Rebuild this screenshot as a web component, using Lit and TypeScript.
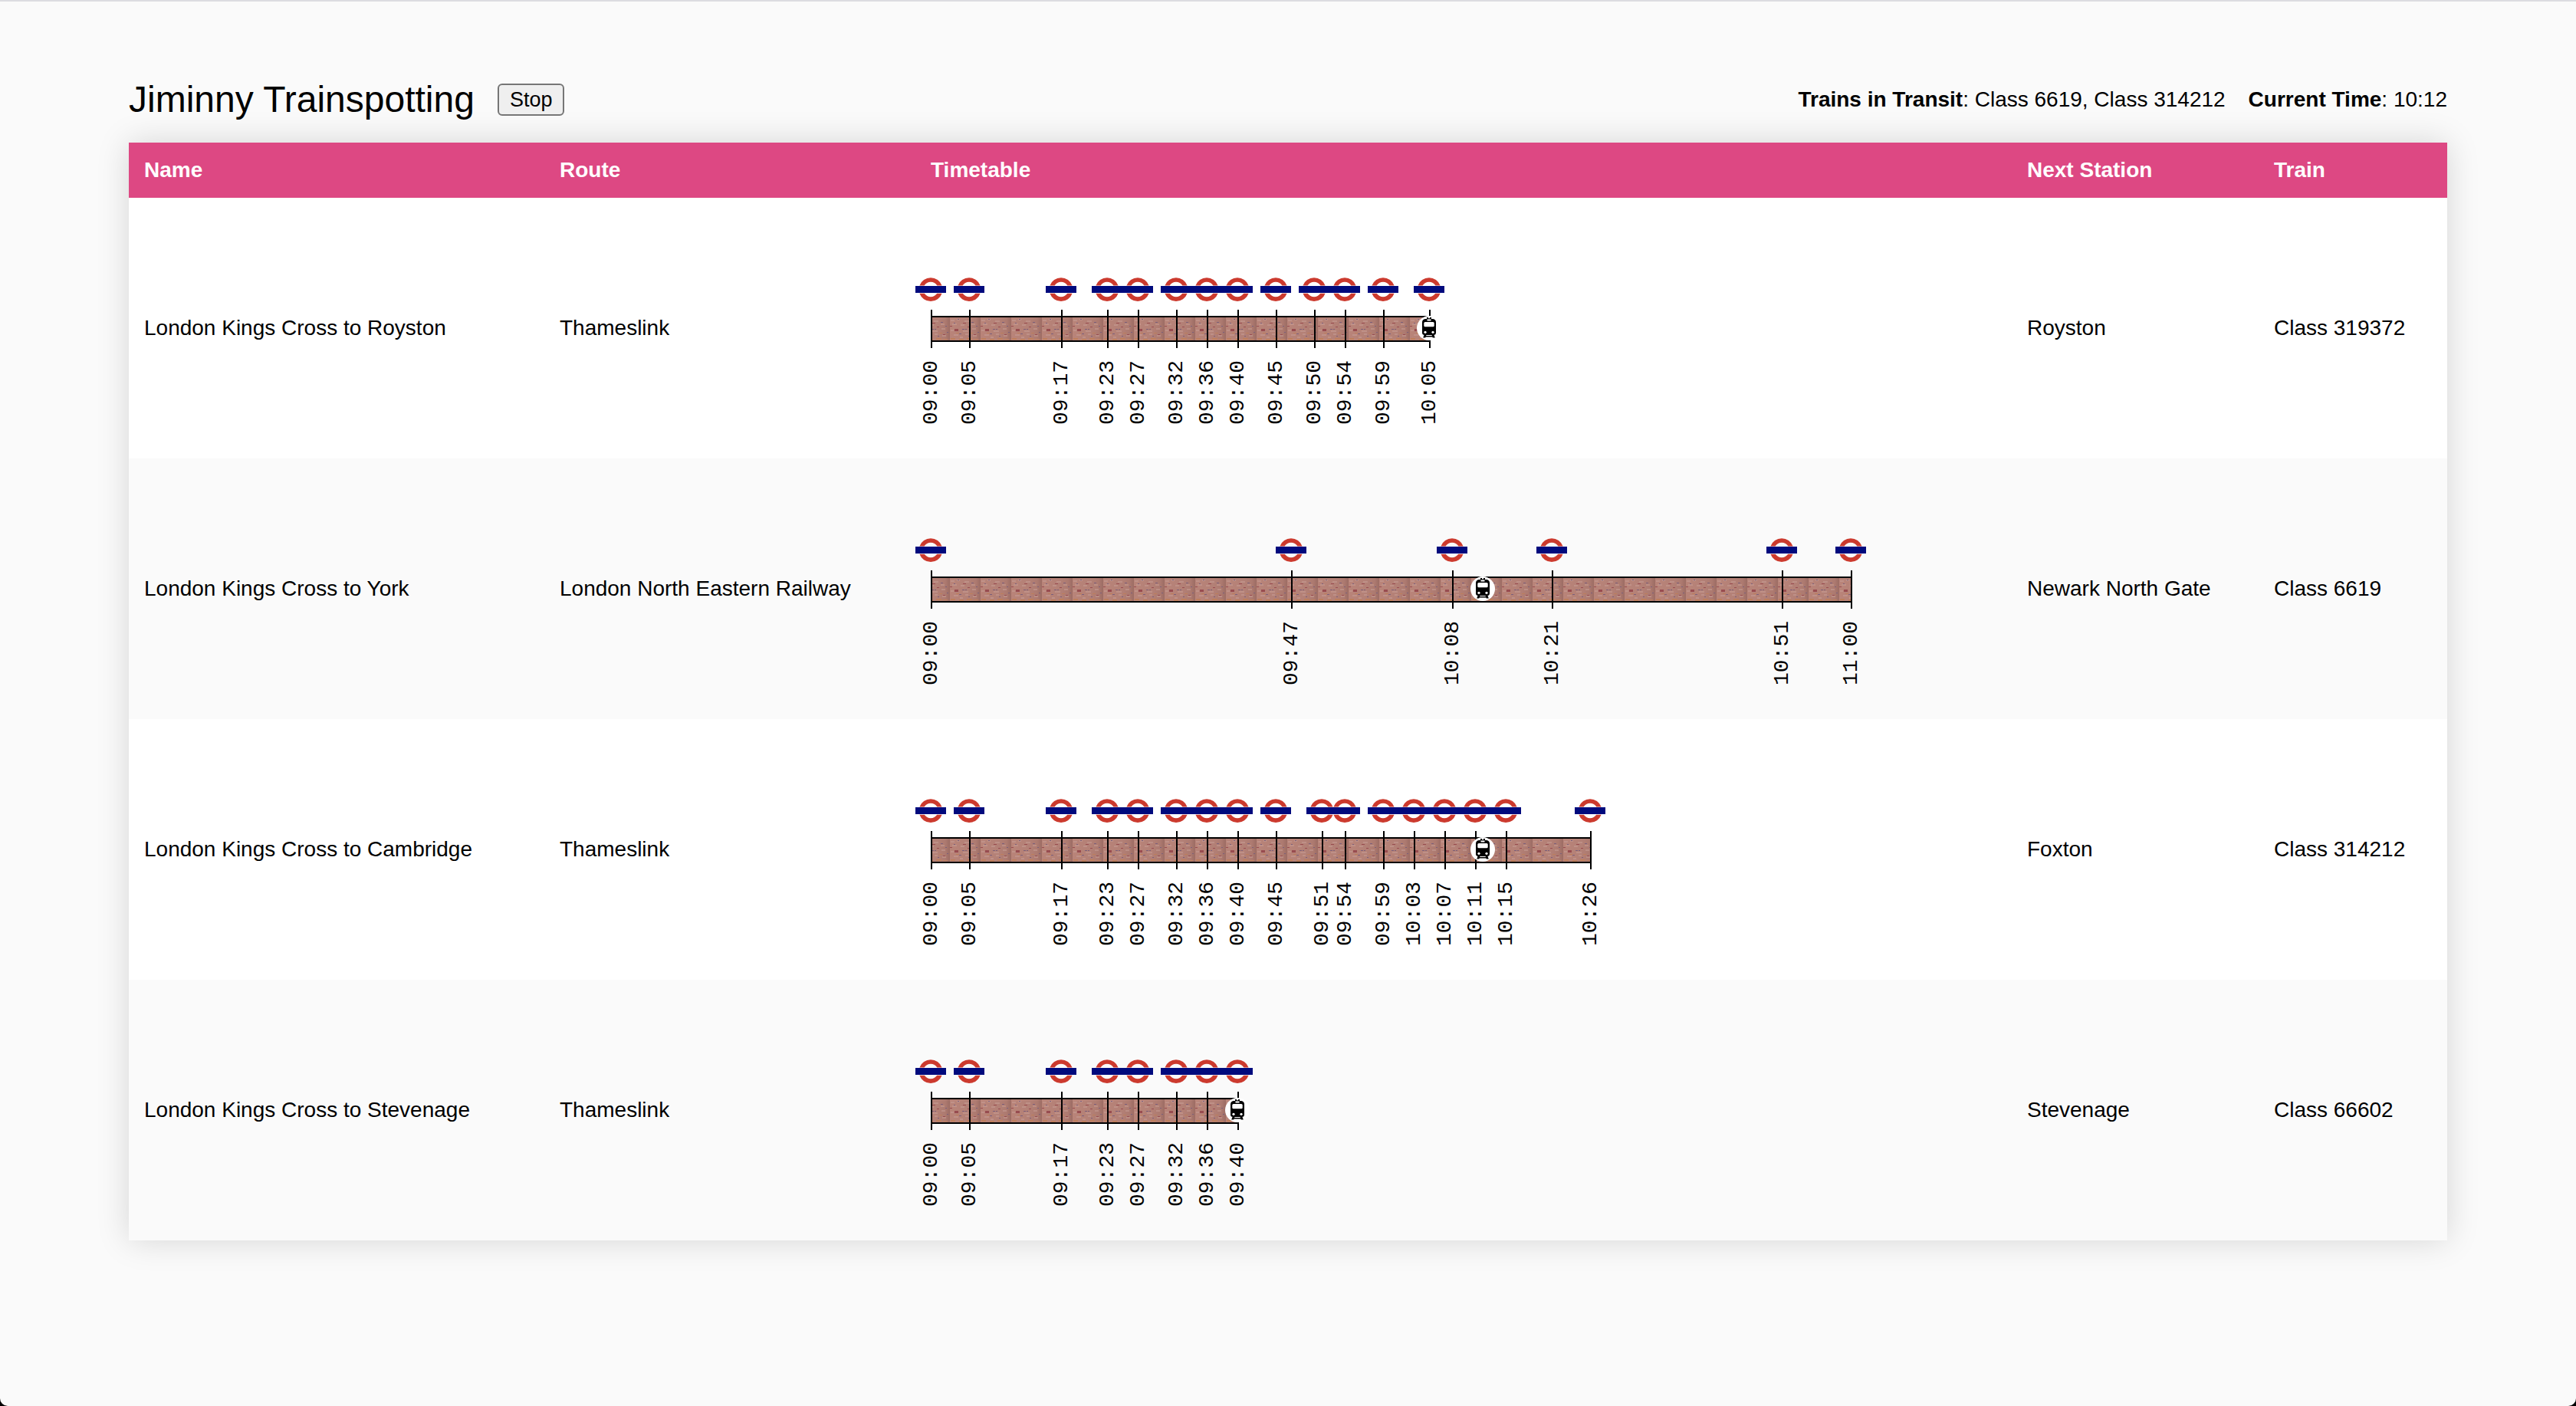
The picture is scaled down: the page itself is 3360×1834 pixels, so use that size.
import { LitElement, html, css } from "lit";
import { customElement, property, state } from "lit/decorators.js";

interface Journey {
  name: string;
  route: string;
  stops: string[];
  next: string;
  train: string;
}

const JOURNEYS: Journey[] = [
  {
    name: "London Kings Cross to Royston",
    route: "Thameslink",
    stops: ["09:00", "09:05", "09:17", "09:23", "09:27", "09:32", "09:36", "09:40", "09:45", "09:50", "09:54", "09:59", "10:05"],
    next: "Royston",
    train: "Class 319372",
  },
  {
    name: "London Kings Cross to York",
    route: "London North Eastern Railway",
    stops: ["09:00", "09:47", "10:08", "10:21", "10:51", "11:00"],
    next: "Newark North Gate",
    train: "Class 6619",
  },
  {
    name: "London Kings Cross to Cambridge",
    route: "Thameslink",
    stops: ["09:00", "09:05", "09:17", "09:23", "09:27", "09:32", "09:36", "09:40", "09:45", "09:51", "09:54", "09:59", "10:03", "10:07", "10:11", "10:15", "10:26"],
    next: "Foxton",
    train: "Class 314212",
  },
  {
    name: "London Kings Cross to Stevenage",
    route: "Thameslink",
    stops: ["09:00", "09:05", "09:17", "09:23", "09:27", "09:32", "09:36", "09:40"],
    next: "Stevenage",
    train: "Class 66602",
  },
];

const PX_PER_MINUTE = 10;

const minutes = (time: string): number => {
  const [h, m] = time.split(":").map(Number);
  return h * 60 + m;
};

// Upper and lower arcs are separate so that the row shows between ring and bar.
const roundel = html`<svg class="roundel" viewBox="0 0 40 32" aria-hidden="true">
  <path d="M5.400 10.500A15.500 15.500 0 0 1 34.600 10.500H28.400A9.800 9.800 0 0 0 11.600 10.500Z" fill="#cc3a2e" />
  <path d="M5.400 20.800A15.500 15.500 0 0 0 34.600 20.800H28.200A9.800 9.800 0 0 1 11.800 20.800Z" fill="#cc3a2e" />
  <rect x="0" y="11" width="40" height="9" fill="#000a7d" />
</svg>`;

const trainIcon = html`<svg class="icon" viewBox="0 0 32 32" role="img" aria-label="Train">
  <circle cx="16" cy="16" r="16" fill="#fff" />
  <path d="M13 2h2v1.200h2V2h2v3.500h-6z" />
  <path d="M11 4h10q4 .8 4 4.500v13.300q0 3.200-3.200 3.200H10.200Q7 25 7 21.800V8.500q0-3.700 4-4.500z" />
  <rect x="13.500" y="4.500" width="5" height="2" fill="#fff" />
  <rect x="9.300" y="8" width="13.400" height="6.300" rx="1.500" fill="#fff" />
  <circle cx="11" cy="21.300" r="1.600" fill="#fff" />
  <circle cx="21" cy="21.300" r="1.600" fill="#fff" />
  <path d="M9.500 25h3l-.5 1h8l-.5-1h3l1.300 3.500h-3l-.5-1H11.700l-.5 1h-3z" />
</svg>`;

@customElement("train-line")
export class TrainLine extends LitElement {
  @property({ attribute: false }) stops: string[] = [];
  @property() now = "";

  static styles = css`
    :host { display: block; }
    .line { position: relative; height: 132px; }
    .track { position: absolute; top: 50px; left: 0; height: 34px; box-sizing: border-box; border-top: 2px solid #000; border-bottom: 2px solid #000; }
    .bricks { display: block; width: 100%; height: 100%; }
    .stop { position: absolute; top: 0; width: 2px; display: flex; flex-direction: column; align-items: center; }
    .roundel { width: 40px; height: 32px; flex: none; display: block; transform: translateX(-1px); }
    .tick { width: 2px; height: 50px; margin-top: 10px; background: #000; }
    .time { margin-top: 16px; writing-mode: vertical-rl; transform: rotate(180deg); font: 28px/32px "Liberation Mono", monospace; }
    .engine { position: absolute; top: 50px; width: 32px; height: 32px; transform: translateX(-50%); }
    .icon { display: block; width: 100%; height: 100%; }
  `;

  private offset(time: string): number {
    return (minutes(time) - minutes(this.stops[0])) * PX_PER_MINUTE;
  }

  render() {
    const length = this.offset(this.stops[this.stops.length - 1]);
    const position = Math.min(this.offset(this.now), length);
    return html`<div class="line">
      <div class="track" style="width:${length}px">
        <svg class="bricks" aria-hidden="true">
          <defs>
            <linearGradient id="clay" x1="0" x2="1" y1="0" y2="0">
              <stop offset="0" stop-color="#b98479" />
              <stop offset=".6" stop-color="#b38076" />
              <stop offset=".85" stop-color="#ad7a70" />
              <stop offset="1" stop-color="#9c6c64" />
            </linearGradient>
            <pattern id="brick" x="25" width="40" height="30" patternUnits="userSpaceOnUse">
              <rect width="40" height="30" fill="url(#clay)" />
              <path d="M1 4h5M9 3h4M19 5h6M28 9h5M3 9h6M14 10h5M1 17h4M17 18h7M29 15h5M5 23h6M20 22h4M30 24h5M13 26h4" stroke="#c9a098" stroke-width="1" fill="none" />
              <path d="M1 27h6v2H1zM12 28h6v2h-6zM22 27h7v2h-7zM31 28h6v1h-6zM8 20h4v1H8zM26 20h4v1h-4z" fill="#bd7e5c" />
              <path d="M6 15h5v3H6zM0 11h3v1H0zM23 12h3v1h-3zM17 7h4v1h-4zM31 22h3v1h-3z" fill="#984c50" />
              <path d="M16 15h3v1h-3zM20 15h2v1h-2zM28 6h3v1h-3zM5 7h2v1H5zM12 21h3v1h-3zM34 11h2v1h-2zM36 19h2v1h-2zM10 2h2v1h-2zM24 24h2v1h-2z" fill="#7b5f7a" />
            </pattern>
          </defs>
          <rect width="100%" height="100%" fill="url(#brick)" />
        </svg>
      </div>
      ${this.stops.map(
        (time) => html`<div class="stop" style="left:${this.offset(time)}px">
          ${roundel}
          <span class="tick"></span>
          <time class="time">${time}</time>
        </div>`
      )}
      <div class="engine" style="left:${position}px">${trainIcon}</div>
    </div>`;
  }
}

@customElement("app-root")
export class AppRoot extends LitElement {
  @state() private running = true;
  private now = "10:12";

  static styles = css`
    :host { display: block; background: #000; color: #000; font: 28px/32px "Liberation Sans", Arial, sans-serif; }
    .page { box-sizing: border-box; min-height: 100vh; padding: 96px 5% 48px; background: #fafafa; border-top: 2px solid #dcdce0; border-radius: 0 0 10px 10px; }
    .bar { display: flex; justify-content: space-between; align-items: center; height: 64px; margin-bottom: 24px; }
    .group { display: flex; align-items: center; gap: 30px; }
    h1 { margin: 0; font-size: 48px; line-height: 56px; font-weight: 400; }
    button { height: 42px; padding: 0 14px; border: 2px solid #767676; border-radius: 6px; background: #efefef; color: #000; font: 27px/32px "Liberation Sans", Arial, sans-serif; }
    table { width: 100%; table-layout: fixed; border-collapse: collapse; background: #fff; box-shadow: 0 0 40px rgba(0, 0, 0, 0.15); }
    th, td { padding: 20px; text-align: left; vertical-align: middle; }
    th { color: #fff; background: #dd4883; font-weight: 700; }
    td { height: 300px; }
    tbody tr:nth-child(even) { background: #fafafa; }
    .name { width: 502px; }
    .route { width: 444px; }
    .next { width: 282px; }
    .train { width: 206px; }
  `;

  render() {
    return html`<main class="page">
      <header class="bar">
        <div class="group">
          <h1>Jiminny Trainspotting</h1>
          <button type="button" @click=${() => (this.running = !this.running)}>${this.running ? "Stop" : "Start"}</button>
        </div>
        <div class="group">
          <span><b>Trains in Transit</b>: Class 6619, Class 314212</span>
          <span><b>Current Time</b>: ${this.now}</span>
        </div>
      </header>
      <table>
        <thead>
          <tr>
            <th class="name">Name</th>
            <th class="route">Route</th>
            <th>Timetable</th>
            <th class="next">Next Station</th>
            <th class="train">Train</th>
          </tr>
        </thead>
        <tbody>
          ${JOURNEYS.map(
            (j) => html`<tr>
              <td>${j.name}</td>
              <td>${j.route}</td>
              <td><train-line .stops=${j.stops} .now=${this.now}></train-line></td>
              <td>${j.next}</td>
              <td>${j.train}</td>
            </tr>`
          )}
        </tbody>
      </table>
    </main>`;
  }
}
